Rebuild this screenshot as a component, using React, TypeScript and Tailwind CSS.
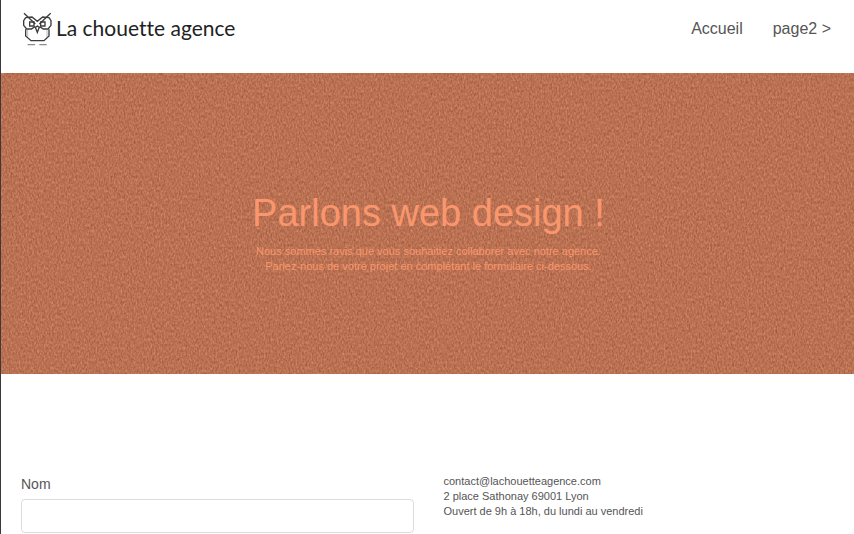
function OwlIcon() {
  return (
    <svg
      viewBox="63 36 93 102"
      className="h-[34px] w-[31px] shrink-0"
      fill="none"
      stroke="#3c3c3c"
      strokeWidth="4"
      aria-hidden="true"
    >
      <path d="M72 40 L106 72 M152 40 L118 72" />
      <path d="M76 53 L96 51 L112 64 L128 51 L148 53" />
      <path d="M77 53 L71 62 V76 L80 87 H94 L105 80 M147 53 L153 62 V76 L144 87 H130 L119 80" />
      <path d="M89 66 H102 V78 H89 Z M122 66 H135 V78 H122 Z" />
      <path d="M106 82 L112 78 L118 82 L112 97 Z" />
      <path d="M77 88 V108 L93 122 H132 L147 108 V88" />
      <path d="M83 90 V110 M141 90 V110" strokeWidth="2" stroke="#999" />
      <path d="M83 134 H105 M118 134 H140" stroke="#8c8c8c" strokeWidth="4" />
    </svg>
  );
}

function CardboardTexture() {
  return (
    <svg className="absolute inset-0 h-full w-full" aria-hidden="true">
      <filter id="grain" x="0" y="0" width="100%" height="100%" colorInterpolationFilters="sRGB">
        <feTurbulence type="fractalNoise" baseFrequency="0.6 0.35" numOctaves="3" seed="8" />
        <feColorMatrix
          values="0.22 0.12 0 0 0.56
                  0.22 0.12 0 0 0.275
                  0.2 0.12 0 0 0.165
                  0 0 0 0 1"
        />
      </filter>
      <rect width="100%" height="100%" filter="url(#grain)" />
    </svg>
  );
}

export default function App() {
  return (
    <div className="min-h-screen border-l border-[#3b393d] bg-white font-['Liberation_Sans',Arial,sans-serif] text-[#555]">
      <header className="flex h-[73px] items-start justify-between pr-[23px] pl-5">
        <a href="#accueil" className="flex items-start gap-1 pt-3">
          <OwlIcon />
          <span className="font-['Lato',sans-serif] text-[21px] leading-8 whitespace-nowrap text-[#222] [font-variant-ligatures:none]">
            La chouette agence
          </span>
        </a>
        <nav className="flex gap-[30px] pt-[17px] text-base leading-6">
          <a href="#accueil">Accueil</a>
          <a href="#page2">page2 &gt;</a>
        </nav>
      </header>

      <section className="relative bg-[#bd7250] pt-[118px] pr-[18px] pb-[100px] pl-5 text-center text-[#f9966d]">
        <CardboardTexture />
        <div className="relative">
          <h1 className="text-[38px] leading-[45px]">Parlons web design !</h1>
          <p className="mt-2 text-[11px] leading-[15px]">
            Nous sommes ravis que vous souhaitiez collaborer avec notre agence.
            <br />
            Parlez-nous de votre projet en complétant le formulaire ci-dessous.
          </p>
        </div>
      </section>

      <main className="grid grid-cols-2 gap-[30px] pt-[100px] pr-[18px] pl-5">
        <form>
          <label htmlFor="nom" className="block text-sm leading-5">
            Nom
          </label>
          <input
            id="nom"
            type="text"
            className="mt-[5px] block h-[34px] w-full rounded border border-[#dcdcdc] bg-white px-3 text-sm outline-none"
          />
        </form>
        <address className="text-[11px] leading-[15px] not-italic">
          contact@lachouetteagence.com
          <br />
          2 place Sathonay 69001 Lyon
          <br />
          Ouvert de 9h à 18h, du lundi au vendredi
        </address>
      </main>
    </div>
  );
}
